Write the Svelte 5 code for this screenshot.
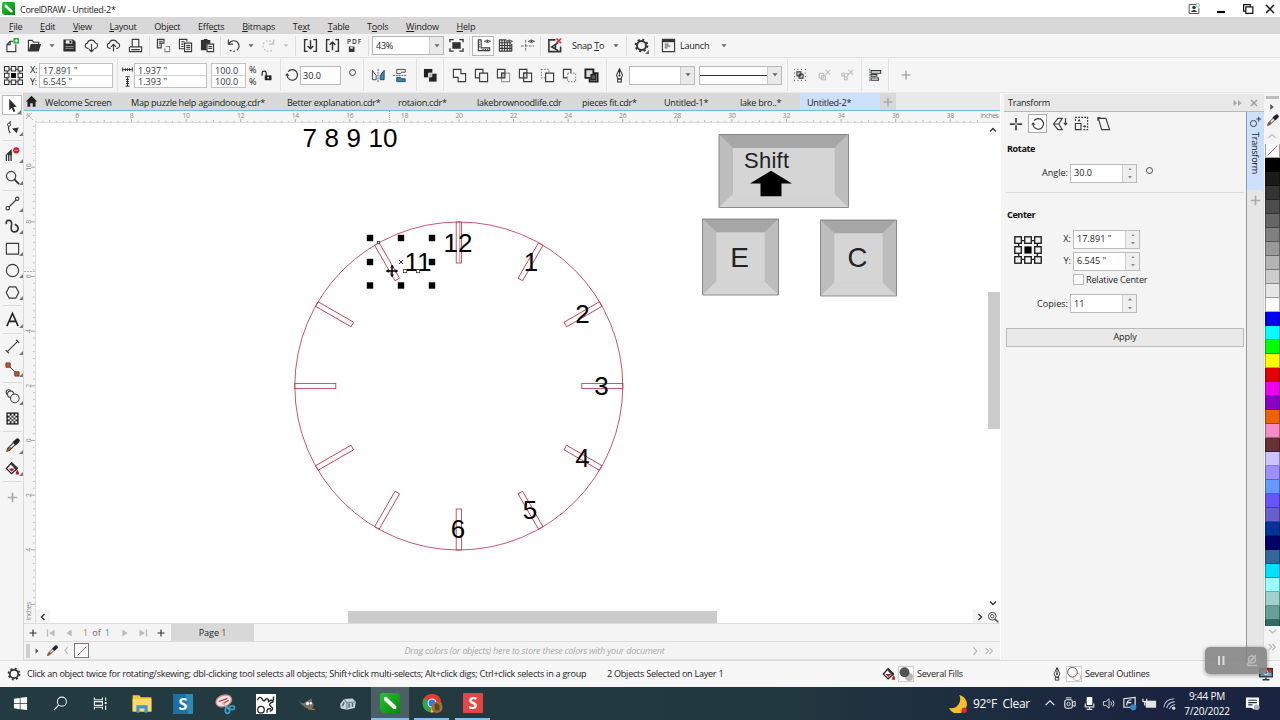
<script>
  const K = 'stroke="#3a3a3a" fill="none" stroke-width="1.2"';
  const fold = (a, b, extra = '') =>
    `<g ${K}><path ${a} d="M1.5 1.5H9.5V10.5H1.5Z"/><path ${b} d="M6 5.5H14.5V14.5H6Z" fill="#f4f4f4"/>${extra}</g>`;
  const dropper = '<path d="M2 14L3 11L9.5 4.5L11.5 6.5L5 13Z" fill="#eee" stroke="#333" stroke-width="1.1"/><path d="M2 14L3 11L5 9L7 11L5 13Z" fill="#a5532b"/><path d="M8 4.5L11.5 8L12.5 7L15 4.6A2 2 0 0 0 11.5 1.2L9 3.5Z" fill="#222"/>';
  const bucket = '<path d="M1.5 8L7 2L13 8L7 13.5Z" fill="#fff" stroke="#222" stroke-width="1.4"/><path d="M7 1L14 7.5L12 10L5.5 3Z" fill="#333"/><path d="M4 8H10.5L7.2 11.5Z" fill="#b3172b"/><path d="M13 9Q16 13 14.5 14.5H11.5Q11 13 13 9Z" fill="#b3172b"/>';
  const cloud = 'M5 11H3.6A2.8 2.8 0 0 1 3.5 5.5A4.5 4.5 0 0 1 12 5A3.1 3.1 0 0 1 12.4 11H11';
  const gear = '<circle cx="8" cy="8" r="4.8" fill="none" stroke="#333" stroke-width="2"/><circle cx="8" cy="8" r="6.3" fill="none" stroke="#333" stroke-width="2" stroke-dasharray="2.3 2.648"/>';
  const pen = '<path d="M8 .8L4.8 7.6L6.3 11.5H9.7L11.2 7.6ZM8 1V7M6 12H10V15H6Z" fill="none" stroke="#333" stroke-width="1.1"/><circle cx="8" cy="8" r="1.2" fill="#333"/>';
  const rot = '<path d="M3.6 4.2A6 6 0 1 1 2.4 9" fill="none" stroke="#333" stroke-width="1.3"/><path d="M.3 8.8L2.5 5.8L5 8.8Z" fill="#333"/>';
  const anchor = '<path d="M3 3H15V15H3Z" fill="none" stroke="#222" stroke-width=".9"/><g fill="#f6f6f6" stroke="#222" stroke-width=".9"><rect x=".5" y=".5" width="4.2" height="4.2"/><rect x="6.9" y=".5" width="4.2" height="4.2"/><rect x="13.3" y=".5" width="4.2" height="4.2"/><rect x=".5" y="6.9" width="4.2" height="4.2"/><rect x="13.3" y="6.9" width="4.2" height="4.2"/><rect x=".5" y="13.3" width="4.2" height="4.2"/><rect x="6.9" y="13.3" width="4.2" height="4.2"/><rect x="13.3" y="13.3" width="4.2" height="4.2"/></g><rect x="6.7" y="6.7" width="4.6" height="4.6" fill="#000"/>';
  const eye = '<path d="M9 3.5Q12 .5 15.5 3.5Q12 6.5 9 3.5Z" fill="#f4f4f4" stroke="#444" stroke-width=".9"/><circle cx="12.2" cy="3.5" r="1" fill="#333"/>';

  const icons = {
    new: `<path d="M9 3.5H5.5L2 7V14.5H11.5V7M5.5 3.5V7H2" ${K}/><path d="M9 0h6v6h-6z" fill="#2fae4a"/><path d="M12 1.2V4.8M10.2 3H13.8" stroke="#fff"/>`,
    open: `<path d="M1.5 14V2.5H5.5L7 4.5H12.5V6.5" ${K}/><path d="M1.5 14.5L4 6.5H15L12.5 14.5Z" fill="#333"/>`,
    save: '<path d="M1.5 1.5H12L14.5 4V14.5H1.5Z" fill="#2d2d2d"/><rect x="4" y="2.5" width="7" height="3.5" fill="#f4f4f4"/><rect x="8" y="3" width="2" height="2.4" fill="#222"/><path d="M3.5 9H12.5M3.5 11H12.5" stroke="#999"/>',
    clouddown: `<path d="${cloud}M8 6.5V14.5M5.3 12L8 14.6L10.7 12" ${K}/>`,
    cloudup: `<path d="${cloud}M8 14.5V7M5.3 9.4L8 6.8L10.7 9.4" ${K}/>`,
    print: `<path d="M4.5 9V1.5H11.5V9M2 9.5H14.5V14.5H1.5V9.5M3.5 12.4H12.5" ${K}/>`,
    cut: `<path d="M1.5 1.5H8.5V5.5H5.5V10.5H1.5ZM3 3.5H7M3 5.5H5M3 7.5H4" ${K}/><path d="M10.5 9H14.5V14.5H9.5V11" fill="none" stroke="#888" stroke-width="1.2"/>`,
    copy: `<path d="M7 11.5H1.5V1.5H9.5V4M3.5 4H7M3.5 6.5H6M3.5 9H6M7 5.5H14.5V14.5H7ZM8.8 8H13M8.8 10H13M8.8 12H13" ${K}/>`,
    paste: `<path d="M1 2H4V1H8V2H11V6H7V13H1Z" fill="#333"/><path d="M7.5 6.5H14.5V14.5H7.5ZM9 9H13M9 11H13" ${K}/>`,
    undo: `<path d="M2.5 1.5V6.5H7.5" ${K}/><path d="M2.8 6.2Q6 1.5 11 3.5Q15.5 7 13 11.5" ${K}/><path d="M13 11.5Q9.5 16 4 13" ${K} stroke-dasharray="2 2"/>`,
    redo: '<g stroke="#c5c5c5" fill="none" stroke-width="1.3"><path d="M13.5 1.5V6.5H8.5"/><path d="M13.2 6.2Q10 1.5 5 3.5Q.5 7 3 11.5Q6.5 16 12 13" stroke-dasharray="2 1.7"/></g>',
    import: '<path d="M5 1.7H1.7V14.3H5M11 14.3H14.3V1.7H11M8 2.5V11.5M5 8.5L8 11.5L11 8.5" fill="none" stroke="#333" stroke-width="1.5"/>',
    export: '<path d="M5 1.7H1.7V14.3H5M11 14.3H14.3V1.7H11M8 13V4.5M5 7.2L8 4.2L11 7.2" fill="none" stroke="#333" stroke-width="1.5"/>',
    pdf: '<text x="0" y="6.8" font-size="7" font-weight="600" textLength="15" fill="#333" font-family="Open Sans">PDF</text><path d="M2 9H7L8 10V15H2Z" fill="#333"/><path d="M3.5 9.5H6.2V11.5H3.5Z" fill="#ddd"/>',
    full: '<rect x="3.5" y="4.5" width="9" height="7" fill="#333"/><path d="M1 4.5V1.8H5M11 1.8H15V4.5M15 11V14H11M5 14H1V11" stroke="#333" fill="none" stroke-width="1.4"/>',
    ruler: `<path d="M2.5 2V13.5H14.5V10.5H5.5V2ZM2.5 4.5H4M2.5 7H4M2.5 9.5H4M7.5 13V11.8M10 13V11.8M12.5 13V11.8" ${K}/>${eye}`,
    grid: `<path d="M1.5 2V14.5M4.3 2V14.5M7.1 2V14.5M9.9 2V14.5M12.7 4V14.5M14.7 6V14.5M1 2H9M1 5H14M1 8H15M1 11H15M1 14H15" ${K}/>${eye}`,
    guides: `<path d="M6 2V15M1 8.5H15" stroke="#666" stroke-dasharray="3 1.2"/>${eye}`,
    snapoff: '<path d="M9 2H2V14.5H14.5V9M12 5L5 9.5L12 13.5M9 7.5V12" fill="none" stroke="#333" stroke-width="1.7"/><path d="M10 .5L15 5.5M15 .5L10 5.5" stroke="#cf3045" stroke-width="1.7"/>',
    gear,
    launch: `<path d="M1.5 1.5H14.5V14.5H1.5Z" ${K}/><path d="M1.5 3.2H14.5" stroke="#333" stroke-width="2.5"/><path d="M4 6.5H8M4 8.5H10M4 10.5H7" stroke="#444"/>`,
    hsize: '<path d="M1 5V11M15 5V11M2 8H14M5 6V10M8 6V10M11 6V10" stroke="#333" stroke-width="1.5"/>',
    vsize: '<path d="M5 1H11M5 15H11M8 2V14M6 5H10M6 8H10M6 11H10" stroke="#333" stroke-width="1.5"/>',
    lock: '<path d="M1.5 9V5A2.8 2.8 0 0 1 7 5V9" fill="none" stroke="#222" stroke-width="1.6"/><path d="M5 8.5H14V15H5Z" fill="#222"/><circle cx="9.5" cy="11.5" r="1.2" fill="#fff"/>',
    rot,
    mirh: '<path d="M1.5 2.5L5.5 8V12.5H1.5Z" fill="none" stroke="#444"/><path d="M7.5 1V15" stroke="#555" stroke-dasharray="2 1"/><path d="M14 2.5L9.8 8V12.5H14Z" fill="#3590a8" stroke="#246"/>',
    mirv: '<path d="M4 1.5H13V4.5H9L8 6H4Z" fill="none" stroke="#444"/><path d="M0 8H15" stroke="#555" stroke-dasharray="2 1"/><path d="M4 14.5H13V11.5H9L8 10H4Z" fill="#3590a8" stroke="#246"/>',
    combine: '<path d="M1 1H10V10H1Z" fill="#222"/><path d="M6 5.5H15V15H6Z" fill="#222" stroke="#f4f4f4"/><path d="M6.5 6H9.5V9.5H6.5Z" fill="#aaa" stroke="#fff" stroke-width=".7"/>',
    weld: `<path d="M1.5 1.5H9.5V6H14.5V14.5H6.5V10H1.5Z" ${K}/>`,
    trim: fold('', ''),
    inter: fold('', 'stroke="#999"', '<path d="M6 5.5H9.5V10.5H6Z" fill="#bbb"/>'),
    simp: fold('', '', '<path d="M6 5.5H9.5V10.5H6Z" fill="#ddd"/>'),
    front: fold('stroke-dasharray="1.5 1.5" stroke="#888"', '', ''),
    back: fold('', 'stroke-dasharray="1.5 1.5" stroke="#888"', ''),
    bound: '<path d="M1.5 1.5H10V5.5H14.5V14.5H6V10.5H1.5Z" fill="#ddd" stroke="#222" stroke-width="2"/><path d="M7.5 7H12.5V12.5H7.5Z" fill="#555" stroke="#222" stroke-width="1.4"/>',
    pen,
    group: '<g fill="#777"><path d="M1 1h1.3v1.3H1zM5 1h1.3v1.3H5zM9 1h1.3v1.3H9zM13.5 1h1.3v1.3h-1.3zM1 5h1.3v1.3H1zM1 9h1.3v1.3H1zM1 13.5h1.3v1.3H1zM5 13.5h1.3v1.3H5zM9 13.5h1.3v1.3H9zM13.5 13.5h1.3v1.3h-1.3zM13.5 5h1.3v1.3h-1.3zM13.5 9h1.3v1.3h-1.3z"/></g><path d="M4.5 4.5H9V9H4.5ZM7 7H11.5V11.5H7Z" fill="none" stroke="#333" stroke-width="1.3"/>',
    ungroup: '<g fill="none" stroke="#bbb" stroke-width="1.2"><path d="M1.5 6H6.5V11.5H1.5ZM4 8.5H8.5V13.5H4Z"/><path d="M8.5 2L14 7.5M14 2L8.5 7.5"/></g>',
    ungroupall: '<g fill="none" stroke="#bbb" stroke-width="1.2"><path d="M2 6H5V9H2ZM5 10H8V13.5H5ZM6 6.5H9V10"/><path d="M9.5 2L15 7.5M15 2L9.5 7.5"/></g>',
    align: '<path d="M2 1V15" stroke="#3a8a7a" stroke-dasharray="2 1"/><path d="M3.5 3H14.5V6H3.5ZM3.5 7.5H10V9.5H3.5ZM3.5 11.5H12V14H3.5Z" fill="none" stroke="#333" stroke-width="1.2"/>',
    plus: '<path d="M8 3V13M3 8H13" stroke="#aaa" stroke-width="1.8"/>',
    darkplus: '<path d="M8 4V12M4 8H12" stroke="#333" stroke-width="1.3"/>',
    home: '<path d="M8 1L1 8H3V14.5H6.5V10H9.5V14.5H13V8H15Z" fill="#222"/>',
    pick: '<path d="M4.5 1L12.5 9.2L9 9.7L11 14L9 15L7.2 10.7L4.5 13Z" fill="#2a2a2a"/>',
    shape: '<path d="M5.5 14Q1.5 8 6 1.5" fill="none" stroke="#333" stroke-width="1.2"/><circle cx="4.3" cy="5" r="1.7" fill="#fff" stroke="#333"/><path d="M7.5 9L14.5 8L12.5 14Z" fill="#333"/>',
    brush: '<path d="M1.5 8V15M4 6V15M6.500 5V15" stroke="#333" stroke-width="1.4" fill="none"/><path d="M1 8L7.200 2V9Z" fill="#333"/><circle cx="12" cy="3.500" r="3.300" fill="#d4142a"/><path d="M10 3.500H14" stroke="#fff" stroke-width=".7"/>',
    zoom: `<circle cx="6.5" cy="6.5" r="5" ${K}/><path d="M10 10L15 15" stroke="#333" stroke-width="2"/>`,
    line: `<path d="M4 12L12 4" ${K}/><circle cx="2.8" cy="13" r="1.8" ${K}/><circle cx="13" cy="3" r="1.8" ${K}/>`,
    curve: '<path d="M1.5 5.500Q.5 1.500 4 1.500Q7.500 1.500 7 6Q5.500 13.500 9.500 13.800Q13.500 14 14 10Q14 7 10.500 5.500" fill="none" stroke="#333" stroke-width="1.800"/>',
    rect: `<path d="M1.5 2.5H14.5V14H1.5Z" ${K}/>`,
    ellipse: `<circle cx="8" cy="8" r="6.5" ${K}/>`,
    poly: `<path d="M4.5 2H11.5L14.7 8L11.5 14H4.5L1.3 8Z" ${K}/>`,
    text: '<path d="M2 15L8 1.5L14 15M4.2 10H11.8" fill="none" stroke="#222" stroke-width="1.7"/>',
    dim: `<path d="M2.5 13.5L13.5 2.5M.8 11.8L4.2 15.2M11.8 .8L15.2 4.2" ${K}/>`,
    connect: '<path d="M4 4L13 13" stroke="#333"/><path d="M1 1H5.5V5.5H1ZM10.5 10.5H15V15H10.5Z" fill="#c25e20" stroke="#633"/>',
    blend: '<g fill="#f4f4f4" stroke="#3a3a3a" stroke-width="1.1"><circle cx="3.800" cy="3.500" r="2.600"/><circle cx="6" cy="5.500" r="3.300"/><circle cx="10.500" cy="10" r="4.600"/></g>',
    checker: '<path d="M1.5 1.5H14.5V14.5H1.5Z" fill="#222"/><g fill="#fff"><path d="M3 3h2v2H3zM7 3h2v2H7zM11 3h2v2h-2zM5 5h2v2H5zM9 5h2v2H9zM3 7h2v2H3zM7 7h2v2H7zM11 7h2v2h-2zM5 9h2v2H5zM9 9h2v2H9zM3 11h2v2H3zM7 11h2v2H7zM11 11h2v2h-2z"/></g>',
    dropper, bucket,
    move: '<path d="M8 1V15M1 8H15" stroke="#444" stroke-width="2"/><path d="M8 6V10M6 8H10" stroke="#f4f4f4" stroke-width=".8"/>',
    scale: '<path d="M1.5 8L6 2.300H10.300L6.800 8L10.300 13.700H6ZM1.500 8H6.800M13.500 2V8.500M11.900 6.800L13.500 8.800L15.100 6.800" fill="none" stroke="#444" stroke-width="1.200"/>',
    size: `<path d="M1.5 8H7.5V14.5H1.5Z" ${K}/><path d="M1.5 5V1.5H14.5V14.5H10M10 11H13" ${K} stroke-dasharray="2 1.2"/><path d="M4 5.5L5.5 3L7 5.5ZM11 9.5L13.5 11L11 12.5Z" fill="#333"/>`,
    skew: `<path d="M2.500 2.5H10.500L14.5 14.5H6Z" ${K}/><path d="M2 5V2H5" ${K}/>`,
    xform: '<circle cx="5.5" cy="10.5" r="3.8" fill="none" stroke="#345" stroke-width="1.2"/><path d="M12 2V8M9 5H15" stroke="#345" stroke-width="1.3"/>',
    start: '<path d="M1 3L7.2 2V7.6H1ZM8 1.9L15 1V7.6H8ZM1 8.4H7.2V14L1 13ZM8 8.4H15V15L8 14Z" fill="#fff"/>',
    find: '<circle cx="9.5" cy="6" r="4.8" fill="none" stroke="#eee" stroke-width="1.1"/><path d="M6 9.7L1 15" stroke="#eee" stroke-width="1.3"/>',
    tasks: '<path d="M1.500 1.500V4H10V1.500M1.500 14.500V12H10V14.500M1.500 6H10V10H1.500ZM13.500 1.500V5M13.500 10V15" fill="none" stroke="#eee" stroke-width="1.2"/><rect x="12.500" y="6.500" width="2" height="2" fill="#fff"/>',
    folder: '<path d="M.5 1H6L7 2.5H15.5V14H.5Z" fill="#f6c544"/><path d="M.5 4H15.5V14H.5Z" fill="#ffd96b"/><path d="M3.5 15V9H12.5V15H10V11.5H6V15Z" fill="#3b97cf"/>',
    snagit: '<rect width="16" height="16" fill="#1d6fa4"/><path d="M10 0H16V16H12Z" fill="#2e8bb8"/><text x="8" y="12.700" text-anchor="middle" font-size="13" font-weight="700" fill="#fff" font-family="Open Sans">S</text>',
    snip: '<ellipse cx="7" cy="5.5" rx="6.5" ry="4.5" transform="rotate(-20 7 5.5)" fill="#f0e3e3" stroke="#b88"/><path d="M3 6L10 3.5M6 8L11 5" stroke="#c33"/><path d="M6 7L12 13" stroke="#bbb"/><ellipse cx="10" cy="13" rx="1.7" ry="2.5" fill="none" stroke="#3b9dc9" stroke-width="1.5"/><ellipse cx="13.6" cy="11" rx="2" ry="1.5" fill="none" stroke="#3b9dc9" stroke-width="1.4"/>',
    puzzle: '<path d="M0 0H16V16H0Z" fill="#fff"/><path d="M1 5Q3 1 5 4Q6 7 8 4Q10 3 10 6Q13 4 14 6M14 6Q9 8 12 10Q15 12 11 14M14 2V5M9 15Q8 11 12 12" fill="none" stroke="#222" stroke-width="1.1"/><circle cx="4" cy="12.5" r="2.6" fill="none" stroke="#222"/>',
    gimp: '<path d="M1 5Q4 9 7 6L12 3L12.5 6Q15 8 13 11Q9 14 5 10Q2 8 1 5Z" fill="#77706a"/><circle cx="8.5" cy="7.5" r="1.4" fill="#fff"/><circle cx="11.3" cy="7.3" r="1.1" fill="#fff"/><path d="M9 12L15 13" stroke="#b77a3a" stroke-width="1.3"/>',
    box: '<path d="M1 8L4.500 3.500L12 3L15 6L14 11.500L7 13L1.500 12Z" fill="#c6d3dc"/><path d="M4.500 3.500L7 7L7 13M7 7L15 6" stroke="#71828e" fill="none"/><path d="M3 10L4.5 6.5M9 11V7.5M12 10.5V7" stroke="#506472" stroke-width="1.3"/>',
    corel: '<defs><linearGradient id="cg" x2="1" y2="1"><stop stop-color="#27c52b"/><stop offset="1" stop-color="#04860b"/></linearGradient></defs><path d="M0 2Q0 0 2 0H14Q16 0 16 2V16H4Q0 16 0 12Z" fill="url(#cg)"/><path d="M3 3.5L5 3L13 10.5V13L10.5 12.5L3.5 6Z" fill="#fff"/>',
    chrome: '<circle cx="8" cy="8" r="7.5" fill="#e33b2e"/><path d="M8 8L1.5 4.2A7.5 7.5 0 0 0 7 15.5Z" fill="#2fa552"/><path d="M8 8H15.4A7.5 7.5 0 0 1 7 15.5Z" fill="#f7c62f"/><circle cx="8" cy="8" r="3.6" fill="#fff"/><circle cx="8" cy="8" r="2.8" fill="#3879d9"/><circle cx="12" cy="11.5" r="4.5" fill="#9a733b"/><path d="M10 9Q12 7 14 10V14H10.5Z" fill="#654724"/>',
    snagred: '<rect width="16" height="16" rx="1" fill="#e54645"/><text x="8" y="12.700" text-anchor="middle" font-size="13" font-weight="700" fill="#fff" font-family="Open Sans">S</text>',
    chevup: '<path d="M3 10.5L8 5.5L13 10.5" fill="none" stroke="#eee" stroke-width="1.3"/>',
    camera: '<rect x="3" y="4" width="8" height="9" rx="2" fill="none" stroke="#eee" stroke-width="1.2"/><circle cx="7" cy="8.5" r="1.8" fill="none" stroke="#eee"/><path d="M4 2H10M11 7L14 5.5V11L11 10" stroke="#eee" fill="none"/>',
    mic: '<rect x="5" y="1" width="6" height="8.5" rx="1" fill="#fff"/><path d="M3.5 8V11.5H12.5V8M8 11V14M5 14.3H11" stroke="#ddd" fill="none" stroke-width="1.3"/>',
    sound: '<path d="M1.5 6H4L7.5 3V13L4 10H1.5ZM9.5 6Q11 8 9.5 10M11.5 4.5Q14 8 11.5 11.5" fill="none" stroke="#ddd"/>',
    pinned: '<path d="M2 3L14 1.5V12H2Z" fill="none" stroke="#eee" stroke-width="1.2"/><path d="M5 10Q5 4 10 4M6 7H10" stroke="#eee" fill="none" stroke-width="1.3"/><circle cx="12" cy="12" r="3.3" fill="#3a86c8"/>',
    battery: '<rect x="4" y="5" width="11" height="7.5" fill="#e5e5e5"/><path d="M1 3V6H5V3M3 6V10" stroke="#eee" fill="none" stroke-width="1.3"/>',
    wifi: '<path d="M2 12Q3 3.5 13 3M5 13Q6 7 13.5 6M8 14Q9 10 14 9" fill="none" stroke="#bbc" stroke-width="1.2"/><circle cx="12.5" cy="13" r="1.7" fill="#ddd"/>',
    note: '<path d="M1 1.5H15V12.5H10V15L7 12.5H1Z" fill="#fff"/><path d="M3.5 4.5H12.5M3.5 7H12.5M3.5 9.5H8" stroke="#1b2843" stroke-width="1.2"/><circle cx="12.5" cy="12" r="3" fill="#aab0ba"/>',
    moon: '<path d="M9 0A8 8 0 0 1 0 11.5A8.3 8.3 0 1 0 9 0Z" fill="#f9bf29"/><circle cx="13.5" cy="13.5" r="2.4" fill="#d62a2d"/>',
    fills: '<rect x=".5" y=".5" width="15" height="15" fill="#fff" stroke="#ccc"/><circle cx="11" cy="11" r="4" fill="#b8b8b8"/><circle cx="6.5" cy="6.3" r="5" fill="#555"/>',
    outlines: '<rect x=".5" y=".5" width="15" height="15" fill="#fff" stroke="#ccc"/><circle cx="11" cy="11" r="3.8" fill="none" stroke="#bbb"/><circle cx="6.5" cy="6.3" r="4.8" fill="#fff" stroke="#555"/>',
    user: '<path d="M1.5 2H11M1.5 2V14H14.5V7" fill="none" stroke="#444" stroke-width="1.2"/><circle cx="8" cy="6" r="2.3" fill="#333"/><path d="M3.5 12Q8 6.5 12.5 12Z" fill="#333"/><circle cx="13" cy="3" r="2.5" fill="none" stroke="#50b86a"/>',
    min: '<path d="M4 11H12" stroke="#000" stroke-width="2.2"/>',
    max: '<path d="M5.5 10.5H3V3H10.5V5.5M5.5 5.5H13.5V13H5.5Z" fill="none" stroke="#111" stroke-width="1.4"/>',
    close: '<path d="M3.5 3.5L12.5 12.5M12.5 3.5L3.5 12.5" stroke="#111" stroke-width="1.7"/>',
    graycl: '<path d="M4 4L12 12M12 4L4 12" stroke="#999" stroke-width="1.7"/>',
    dbl: '<path d="M2 4L7 8L2 12ZM8 4L13 8L8 12Z" fill="#aaa"/>',
    first: '<path d="M4 4V12" stroke="#bbb" stroke-width="1.6"/><path d="M12 4L6 8L12 12Z" fill="#bbb"/>',
    prev: '<path d="M11 4L5 8L11 12Z" fill="#bbb"/>',
    next: '<path d="M5 4L11 8L5 12Z" fill="#bbb"/>',
    last: '<path d="M12 4V12" stroke="#bbb" stroke-width="1.6"/><path d="M4 4L10 8L4 12Z" fill="#bbb"/>',
    tri: '<path d="M6 4.5L10 8L6 11.5Z" fill="#555"/>',
    lt: '<path d="M10 3L5.5 8L10 13" stroke="#bbb" fill="none" stroke-width="1.5"/>',
    gt: '<path d="M6 3L10.5 8L6 13" stroke="#bbb" fill="none" stroke-width="1.5"/>',
    gtgt: '<path d="M3.5 4L7.5 8L3.5 12M8.5 4L12.5 8L8.5 12" stroke="#aaa" fill="none" stroke-width="1.4"/>',
    bl: '<path d="M10 4L6 8L10 12" stroke="#333" fill="none" stroke-width="1.8"/>',
    br: '<path d="M6 4L10 8L6 12" stroke="#333" fill="none" stroke-width="1.8"/>',
    bu: '<path d="M4 10L8 6L12 10" stroke="#333" fill="none" stroke-width="1.8"/>',
    bd: '<path d="M4 6L8 10L12 6" stroke="#333" fill="none" stroke-width="1.8"/>',
    gu: '<path d="M3 10.5L8 6L13 10.5" stroke="#bbb" fill="none" stroke-width="1.5"/>',
    gd: '<path d="M3 5.5L8 10L13 5.5" stroke="#bbb" fill="none" stroke-width="1.8"/>',
    monitor: '<rect x="0" y="1" width="16" height="11" fill="#333"/><rect x="1.5" y="2.5" width="13" height="4" fill="#c33"/><rect x="1.5" y="6.5" width="13" height="4" fill="#4bb6d5"/><circle cx="8" cy="6.5" r="2.3" fill="none" stroke="#fff"/><path d="M4 14.5H12M8 12V14" stroke="#333" stroke-width="1.6"/>',
    none: '<path d="M0 0H16V16H0Z" fill="#fff"/><path d="M2 14L14 2" stroke="#b55" stroke-width="1.2"/>'
  };

  const menus = [['', 'F', 'ile'], ['', 'E', 'dit'], ['', 'V', 'iew'], ['', 'L', 'ayout'], ['Ob', 'j', 'ect'], ['Effe', 'c', 'ts'], ['', 'B', 'itmaps'], ['Te', 'x', 't'], ['', 'T', 'able'], ['T', 'o', 'ols'], ['', 'W', 'indow'], ['', 'H', 'elp']];

  const std = [
    ['i', 22, 'new'], ['i', 22, 'open'], ['c', 13], ['i', 22, 'save'], ['i', 22, 'clouddown'], ['i', 22, 'cloudup'], ['i', 22, 'print'], ['s', 6],
    ['i', 22, 'cut'], ['i', 22, 'copy'], ['i', 22, 'paste'], ['s', 4], ['i', 22, 'undo'], ['c', 13], ['i', 22, 'redo'], ['cg', 13], ['s', 7],
    ['i', 22, 'import'], ['i', 22, 'export'], ['i', 22, 'pdf'], ['s', 6], ['combo', 72, '43%'], ['g', 2], ['i', 22, 'full'], ['s', 5],
    ['on', 22, 'ruler'], ['i', 22, 'grid'], ['i', 22, 'guides'], ['s', 5], ['i', 22, 'snapoff'], ['snap', 44], ['c', 13], ['s', 8],
    ['gear', 22, 'gear'], ['s', 5], ['i', 22, 'launch'], ['t', 38, 'Launch'], ['c', 13]
  ];
  const shaping = ['weld', 'trim', 'inter', 'simp', 'front', 'back', 'bound'];
  const tabs = [['Welcome Screen', 86], ['Map puzzle help againdooug.cdr*', 156], ['Better explanation.cdr*', 111], ['rotaion.cdr*', 79], ['lakebrownoodlife.cdr', 105], ['pieces fit.cdr*', 82], ['Untitled-1*', 76], ['lake bro..*', 60]];
  const tools = [
    ['pick', 20, 1], ['shape', 24, 1], ['-', 3], ['brush', 24, 1], ['zoom', 22, 1], ['-', 4], ['line', 23, 1], ['curve', 22, 1], ['rect', 22, 1],
    ['ellipse', 22, 1], ['poly', 22, 1], ['-', 5], ['text', 23, 1], ['-', 4], ['dim', 23, 1], ['connect', 22, 1], ['-', 5], ['blend', 23, 1], ['checker', 21, 0],
    ['-', 5], ['dropper', 23, 1], ['bucket', 22, 1], ['-', 4], ['plus', 28, 0]
  ];
  const swatches = ['#000', '#1a1a1a', '#333', '#4d4d4d', '#666', '#808080', '#999', '#b3b3b3', '#ccc', '#e6e6e6', '#fff', '#0000f0', '#00ffff', '#00ff00', '#ffff00', '#e30000', '#ee00ee', '#8b00c0', '#ec6300', '#f58cc5', '#653333', '#ccc4ff', '#9c8fff', '#6699ff', '#6655ff', '#665fcc', '#003399', '#000066', '#336699', '#00e0ff', '#99ffff', '#9fd2cb', '#669f96', '#336b64'];
  const apps = ['start', 'find', 'tasks', 'folder', 'snagit', 'snip', 'puzzle', 'gimp', 'box'];
  const tray = ['chevup', 'camera', 'mic', 'sound', 'pinned', 'battery', 'wifi'];

  const unit = 27.33;
  const range = (a, b) => Array.from({ length: b - a + 1 }, (_, i) => a + i);
  const hTicks = range(18, 156).map((q) => ({ q, x: 459 - 24 + (q / 4 - 20) * unit * 0.9985 })).filter((t) => t.x > 12 && t.x < 972);
  const vTicks = range(-24, 46).map((q) => ({ q, y: 440.5 - 111 - (q / 4) * unit })).filter((t) => t.y > 14 && t.y < 496);
  const marks = range(0, 11).map((i) => i * 30);
  const digits = [['12', 458, 252], ['1', 531, 271], ['2', 582.5, 323], ['3', 601.5, 395], ['4', 582.5, 467], ['5', 530, 519], ['6', 458, 538]];
  const handles = [[370, 238], [401, 238], [432, 238], [370, 262], [432, 262], [370, 285.5], [401, 285.5], [432, 285.5]];
</script>

{#snippet ic(name, cls = 'i14')}
  <svg class={cls} viewBox="0 0 16 16">{@html icons[name]}</svg>
{/snippet}
{#snippet caret(gray = false)}
  <svg class="caret" viewBox="0 0 7 4"><path d="M.5 0H6.5L3.5 3.6Z" fill={gray ? '#c8c8c8' : '#666'} /></svg>
{/snippet}
{#snippet spin(value)}
  <div class="spin"><span>{value}</span><div class="arrows">
    <svg viewBox="0 0 5 3"><path d="M0 3L2.5 0L5 3Z" fill="#888" /></svg><svg viewBox="0 0 5 3"><path d="M0 0L2.5 3L5 0Z" fill="#888" /></svg>
  </div></div>
{/snippet}
{#snippet key(x, y, w, h)}
  <g transform="translate({x} {y})">
    <path d="M0 0H{w}V{h}H0Z" fill="#cdcdcd" />
    <path d="M0 0H{w}L{w - 14} 13.5H14Z" fill="#a6a6a6" />
    <path d="M0 0L14 13.5V{h - 13.5}L0 {h}ZM{w} 0L{w - 14} 13.5V{h - 13.5}L{w} {h}Z" fill="#bdbdbd" />
    <path d="M14 13.5H{w - 14}V{h - 13.5}H14Z" fill="#d5d5d5" />
    <path d="M14 {h - 13.5}H{w - 14}L{w} {h}H0Z" fill="#d4d4d4" />
    <path d="M0 0H{w}V{h}H0Z" fill="none" stroke="#777" stroke-width=".8" />
  </g>
{/snippet}

<div class="window">
  <header class="title">{@render ic('corel', 'i13')}<span>CorelDRAW - Untitled-2*</span>
    <div class="winbtns">{@render ic('user', 'i12')}{@render ic('min', 'i16')}{@render ic('max', 'i14 wm')}{@render ic('close', 'i14 wc')}</div>
  </header>
  <nav class="menu">{#each menus as m}<span>{m[0]}<u>{m[1]}</u>{m[2]}</span>{/each}</nav>

  <div class="std">
    {#each std as [kind, w, v]}
      <div class="cell {kind}" style:width="{w}px">
        {#if kind === 'i' || kind === 'on' || kind === 'gear'}{@render ic(v, 'i15')}
        {:else if kind === 'c'}{@render caret()}
        {:else if kind === 'cg'}{@render caret(true)}
        {:else if kind === 's'}<i></i>
        {:else if kind === 'combo'}<span>{v}</span><b>{@render caret()}</b>
        {:else if kind === 'snap'}<span>Snap <u>T</u>o</span>
        {:else if kind === 't'}<span>{v}</span>{/if}
      </div>
    {/each}
  </div>

  <div class="prop">
    <svg class="anchor" viewBox="0 0 18 18">{@html anchor}</svg>
    <div class="lbl"><span>X:</span><span>Y:</span></div>
    <div class="pair pos"><span>17.891 "</span><span>6.545 "</span></div>
    <i class="sep s1"></i>
    <div class="dims">{@render ic('hsize', 'i11')}{@render ic('vsize', 'i11')}</div>
    <div class="pair siz"><span>1.937 "</span><span>1.393 "</span></div>
    <div class="pair pct"><span>100.0</span><span>100.0</span></div>
    <div class="lbl pc"><span>%</span><span>%</span></div>
    {@render ic('lock', 'i12 lk')}
    <i class="sep s2"></i>
    {@render ic('rot', 'i14 rt')}
    <div class="field">30.0</div>
    <div class="deg"></div>
    <i class="sep s3"></i>
    <div class="slot">{@render ic('mirh', 'i15')}</div><div class="slot">{@render ic('mirv', 'i15')}</div>
    <i class="sep s4"></i>
    <div class="slot">{@render ic('combine', 'i15')}</div>
    <i class="sep s5"></i>
    {#each shaping as s}<div class="slot">{@render ic(s, 'i15')}</div>{/each}
    <i class="sep s6"></i>
    <div class="slot pn">{@render ic('pen', 'i15')}</div>
    <div class="drop d1"><b>{@render caret()}</b></div>
    <div class="drop d2"><em></em><b>{@render caret()}</b></div>
    <i class="sep s7"></i>
    <div class="slot">{@render ic('group')}</div><div class="slot ug">{@render ic('ungroup')}</div><div class="slot">{@render ic('ungroupall')}</div>
    <i class="sep s8"></i>
    <div class="slot">{@render ic('align')}</div>
    <i class="sep s9"></i>
    <div class="slot ad">{@render ic('plus')}</div>
  </div>

  <div class="main">
    <aside class="tools">
      {#each tools as [name, h, flyout], n}
        <div class="tool" class:sel={n === 0} class:rule={name === '-'} style:height="{h}px">
          {#if name !== '-'}{@render ic(name, 'i15')}{#if flyout}<s></s>{/if}{/if}
        </div>
      {/each}
    </aside>

    <section class="doc">
      <div class="tabs">
        <div class="home">{@render ic('home', 'i13')}</div>
        {#each tabs as [name, w]}<div class="tab" style:width="{w}px">{name}</div>{/each}
        <div class="tab active">Untitled-2*</div>
        <div class="newtab">{@render ic('plus', 'i14')}</div>
      </div>
      <svg class="hr" viewBox="0 0 976 12">
        <path d="M3 3L9 9M3 3V6M3 3H6M2 8L8 2" stroke="#aaa" stroke-width=".8" fill="none" />
        {#each hTicks as t}
          {#if t.q % 8 === 0}
            <path d="M{t.x} 8V12" stroke="#999" stroke-width=".8" />
            {#if t.q <= 152}<text x={t.x} y="6.8" text-anchor="middle">{t.q / 4}</text>{/if}
          {:else}<path d="M{t.x} {t.q % 4 === 0 ? 9 : 10}V11.3" stroke="#aaa" stroke-width=".8" />{/if}
        {/each}
        <path d="M365.500 0V12" stroke="#888" stroke-width=".7" stroke-dasharray="1 1" />
        <text x="956.500" y="6.500" textLength="18">inches</text>
        <path d="M12 11.500H976" stroke="#ddd" />
      </svg>
      <div class="work">
        <svg class="vr" viewBox="0 12 12 500">
          {#each vTicks as t}
            {#if t.q % 8 === 0}
              <path d="M7 {t.y}H11" stroke="#999" stroke-width=".8" />
              {#if t.q > -20}<text transform="translate(6.500 {t.y}) rotate(-90)" text-anchor="middle">{Math.abs(t.q / 4)}</text>{/if}
            {:else}<path d="M9 {t.y}H10.500" stroke="#aaa" stroke-width=".8" />{/if}
          {/each}
          <path d="M0 160.500H12" stroke="#999" stroke-width=".7" stroke-dasharray="2 1" />
          <text transform="translate(6.500 509) rotate(-90)" textLength="18">inches</text>
          <path d="M11.500 12V512" stroke="#ddd" />
        </svg>
        <svg class="canvas" viewBox="36 123 950 487">
          {@render key(719, 134.5, 129.500, 73)}
          {@render key(702.500, 219, 76, 76)}
          {@render key(820.500, 220, 76, 76)}
          <path d="M771 170.800L792 183.500H781.500V196.300H760.500V183.500H750Z" fill="#000" />
          <g class="keys"><text x="744" y="168" font-size="22" textLength="45">Shift</text><text x="739.500" y="266.500" font-size="28" text-anchor="middle">E</text><text x="857.500" y="267" font-size="27.500" text-anchor="middle">C</text></g>
          <g fill="none" stroke="#bd3a50" stroke-width=".85">
            <circle cx="458.800" cy="386" r="164" />
            {#each marks as a}<rect x="456.200" y="222" width="5.200" height="41" transform="rotate({a} 458.800 386)" />{/each}
            <path d="M459.800 222V263" stroke="#8c6670" stroke-width=".7" />
          </g>
          <g class="nums">
            <text x="302.500" y="147" textLength="95">7 8 9 10</text>
            {#each digits as [d, x, y]}<text {x} {y} text-anchor="middle">{d}</text>{/each}
            <text x="404.500" y="271">11</text>
          </g>
          {#each handles as [x, y]}<rect x={x - 3.2} y={y - 3.2} width="6.400" height="6.400" />{/each}
          <path d="M399 260L403 264M403 260L399 264" stroke="#222" stroke-width=".9" />
          <g fill="#fff" stroke="#333" stroke-width=".8"><rect x="403.500" y="269.500" width="3.200" height="3.200" /><rect x="416.500" y="269.500" width="3.200" height="3.200" /><rect x="377.500" y="241.500" width="2.200" height="2.200" /></g>
          <path d="M392 265.500V276.500M386.500 271H397.500" stroke="#000" stroke-width="1.500" />
          <path d="M390 267.500L392 265L394 267.500ZM390 274.500L392 277L394 274.500ZM388.500 269L386 271L388.500 273ZM395.500 269L398 271L395.500 273Z" />
        </svg>
        <div class="vscroll">{@render ic('bu', 'i12')}<div class="vthumb"></div>{@render ic('bd', 'i12')}</div>
      </div>
      <div class="hscroll"><div class="end">{@render ic('bl', 'i12')}</div><div class="hthumb"></div><div class="end">{@render ic('br', 'i12')}</div><svg class="i12" viewBox="0 0 16 16"><circle cx="7" cy="7" r="5.200" fill="none" stroke="#444" stroke-width="1.300" /><circle cx="7" cy="7" r="2.200" fill="none" stroke="#444" stroke-width="1.300" /><path d="M11 11L15 15" stroke="#444" stroke-width="2" /></svg></div>
      <div class="pages">
        {@render ic('darkplus', 'i14 p1')}{@render ic('first')}{@render ic('prev', 'i14 p2')}
        <span class="of"><b>1</b><span>of</span><em>1</em></span>
        {@render ic('next')}{@render ic('last', 'i14 p3')}{@render ic('darkplus', 'i14 p4')}
        <div class="page">Page <b>1</b></div>
      </div>
      <div class="docpal">
        <i class="grip"></i>{@render ic('tri', 'i12')}{@render ic('dropper', 'i12 e')}{@render ic('lt', 'i11')}<div class="nocol">{@render ic('none', 'i12')}</div>
        <span>Drag colors (or objects) here to store these colors with your document</span>{@render ic('gt', 'i12')}{@render ic('gtgt', 'i12 z')}
      </div>
    </section>

    <section class="side">
      <div class="dhead"><span>Transform</span>{@render ic('dbl', 'i12')}{@render ic('graycl', 'i12')}</div>
      <div class="srow">
        <div class="dbody">
          <div class="modes"><div>{@render ic('move')}</div><div class="mon">{@render ic('rot')}</div><div>{@render ic('scale', 'i16')}</div><div>{@render ic('size', 'i15')}</div><div>{@render ic('skew', 'i15')}</div></div>
          <h4>Rotate</h4>
          <div class="frow f1"><label for="ang">Angle:</label>{@render spin('30.0')}<div class="deg"></div></div>
          <hr />
          <h4 class="h2">Center</h4>
          <div class="center">
            <svg viewBox="0 0 18 18">{@html anchor}</svg>
            <div class="xy"><div class="frow"><label for="cx">X:</label>{@render spin('17.891 "')}</div><div class="frow"><label for="cy">Y:</label>{@render spin('6.545 "')}</div><div class="rel"><i></i>Relative Center</div></div>
          </div>
          <div class="frow f3"><label for="n">Copies:</label>{@render spin('11')}</div>
          <button>Apply</button>
        </div>
        <aside class="strip"><div class="vt">{@render ic('xform', 'i13')}<span>Transform</span></div>{@render ic('plus', 'i15')}</aside>
      </div>
    </section>
    <aside class="pal">
      <i class="dots"></i>{@render ic('tri', 'i14 a')}{@render ic('dropper', 'i13')}{@render ic('gu', 'i12 b')}
      <div class="sw"><div class="chip">{@render ic('none', 'i13')}</div>{#each swatches as c}<div class="chip" style:background={c}></div>{/each}</div>
      {@render ic('gd', 'i11')}{@render ic('gtgt', 'i12 d')}
    </aside>
  </div>

  <footer class="status">
    <div class="sg">{@render ic('gear', 'i14')}</div>
    <span class="hint">Click an object twice for rotating/skewing; dbl-clicking tool selects all objects; Shift+click multi-selects; Alt+click digs; Ctrl+click selects in a group</span>
    <span class="selinfo">2 Objects Selected on Layer 1</span>
    <div class="fo fa">{@render ic('bucket', 'i14')}{@render ic('fills', 'i16')}<span>Several Fills</span></div>
    <div class="fo fb">{@render ic('pen', 'i14')}{@render ic('outlines', 'i16')}<span>Several Outlines</span></div>
    {@render ic('monitor', 'i14 mo')}
    <div class="recorder"><svg viewBox="0 0 62 27"><path d="M14 9V18M18.500 9V18" stroke="#ddd" stroke-width="2" /><circle cx="47" cy="12.500" r="3.500" fill="none" stroke="#bbb" stroke-width="1.500" /><circle cx="47" cy="12.500" r="1.200" fill="#bbb" /><path d="M42 18.500H52M42 18L51 8" stroke="#bbb" stroke-width="1.300" /></svg></div>
  </footer>

  <div class="taskbar">
    {#each apps as a}<div class="app {a}">{@render ic(a, a === 'start' || a === 'find' || a === 'tasks' ? 'i15' : a === 'box' || a === 'gimp' ? 'i18' : 'i20')}</div>{/each}
    <div class="app run cur">{@render ic('corel', 'i20')}</div><div class="app run chrome">{@render ic('chrome', 'i20')}</div><div class="app run">{@render ic('snagred', 'i20')}</div>
    <div class="weather">{@render ic('moon', 'i18')}<span>92°F&nbsp; Clear</span></div>
    <div class="tray">{#each tray as t}{@render ic(t, t === 'chevup' ? 'i14' : 'i15')}{/each}</div>
    <div class="clock"><span>9:44 PM</span><span>7/20/2022</span></div>
    {@render ic('note', 'i15')}
  </div>
</div>

<style>
  :global(body) { margin: 0; overflow: hidden; }
  * { box-sizing: border-box; }
  svg { display: block; flex: none; }
  .window { width: 1280px; height: 720px; display: flex; flex-direction: column; background: #f4f4f4; font: 9.1px/12px "Open Sans", "Noto Sans", sans-serif; letter-spacing: -.27px; color: #1c1c1c; overflow: hidden; white-space: nowrap; }
  .i11 { width: 11px; height: 11px; } .i12 { width: 12px; height: 12px; } .i13 { width: 13px; height: 13px; } .i14 { width: 14px; height: 14px; }
  .i15 { width: 15px; height: 15px; overflow: visible; } .i16 { width: 16px; height: 16px; } .i18 { width: 18px; height: 18px; } .i20 { width: 20px; height: 20px; overflow: visible; }
  u { text-underline-offset: 1px; text-decoration-thickness: 1px; }
  .title { height: 17px; flex: none; background: #fff; display: flex; align-items: center; padding-left: 2px; gap: 5px; }
  .title > span { padding-top: 2px; letter-spacing: -.34px; }
  .winbtns { margin-left: auto; display: flex; align-items: center; gap: 13px; padding-right: 3px; }
  .winbtns > :global(.wm) { margin-left: -1px; } .winbtns > :global(.wc) { margin-left: -5px; }
  .menu { height: 17px; flex: none; background: #d8d8d8; display: flex; align-items: center; gap: 17.75px; padding: 3px 0 0 9px; }
  .std { height: 24px; flex: none; display: flex; align-items: center; padding-left: 1px; border-bottom: 1px solid #e2e2e2; background: #f5f5f5; }
  .cell { height: 20px; flex: none; display: flex; align-items: center; justify-content: center; position: relative; }
  .cell span { padding-top: 1px; }
  .cell.s i { width: 1px; height: 20px; background: #dedede; }
  .cell.on { border: 1px solid #b5b5b5; background: #fdfdfd; }
  .cell.combo { border: 1px solid #b5b5b5; background: #fff; height: 19px; justify-content: space-between; padding-left: 3px; margin-left: 1px; margin-right: -1px; }
  .combo b { width: 14px; align-self: stretch; background: #e9e9e9; border-left: 1px solid #ccc; display: grid; place-items: center; }
  .caret { width: 6px; height: 4px; }
  .cell.snap, .cell.t { justify-content: flex-start; padding-left: 7px; }
  .cell.t { padding-left: 1px; }
  .gear::after { content: ""; position: absolute; right: 3px; bottom: 2px; border: 2px solid; border-color: transparent #666 #666 transparent; }
  .prop { height: 35px; flex: none; display: flex; align-items: center; padding-left: 4px; border-bottom: 1px solid #e9e9e9; background: #f5f5f5; }
  .anchor { width: 19px; height: 19px; }
  .lbl { display: flex; flex-direction: column; width: 16px; padding: 1px 0 0 7px; }
  .lbl.pc { padding-left: 3px; width: 15px; }
  .pair { display: flex; flex-direction: column; background: #fff; border: 1px solid #c2c2c2; height: 25px; letter-spacing: 0; }
  .pair span { flex: 1; line-height: 13px; padding-left: 3px; color: #303840; height: 11.5px; }
  .pair span + span { border-top: 1px solid #d2d2d2; line-height: 12px; }
  .pos { width: 74px; } .siz { width: 73px; } .pct { width: 35px; margin-left: 4px; }
  .sep { width: 1px; height: 32px; background: #e0e0e0; flex: none; }
  .s1 { margin: 0 4px 0 4px; }
  .dims { display: flex; flex-direction: column; gap: 1px; margin-right: 1px; }
  .s2 { margin: 0 4px 0 7px; }
  .field { width: 41px; height: 19px; margin-left: 1px; border: 1px solid #b9b9b9; background: #fff; line-height: 18px; padding-left: 2px; letter-spacing: 0; }
  .deg { width: 7px; height: 7px; border: 1.5px solid #444; border-radius: 50%; }
  .prop .deg { margin: -6px 0 0 8px; }
  .s3 { margin: 0 3px 0 7px; } .slot { width: 22px; display: grid; place-items: center; flex: none; }
  .s4 { margin: 0 2px 0 5px; } .s5 { margin: 0 4px 0 2px; } .s6 { margin: 0 1px 0 4px; }
  .drop { height: 19px; border: 1px solid #b9b9b9; background: #fff; display: flex; align-items: center; justify-content: flex-end; }
  .drop b { width: 14px; align-self: stretch; background: #e9e9e9; border-left: 1px solid #ccc; display: grid; place-items: center; }
  .drop em { flex: 1; height: 1px; background: #333; }
  .d1 { width: 66px; margin: 0 4px 0 -1px; } .d2 { width: 83px; }
  .s7 { margin: 0 1px 0 5px; } .ug { margin-left: 3px; } .s8 { margin: 0 2px 0 3px; } .s9 { margin: 0 6px 0 2px; }
  .main { height: 567px; flex: none; display: flex; }
  .tools { width: 24px; border-right: 1px solid #d9d9d9; display: flex; flex-direction: column; padding-top: 2px; background: #f5f5f5; }
  .tool { width: 21px; margin-left: 2px; display: flex; align-items: center; justify-content: center; position: relative; flex: none; }
  .tool.sel { background: #fff; border: 1px solid #bbb; width: 20px; }
  .tool.rule::before { content: ""; height: 1px; width: 19px; background: #dcdcdc; }
  .tool s { position: absolute; right: 0; bottom: 3px; border: 2px solid; border-color: transparent #777 #777 transparent; }
  .tool.sel s { bottom: 0; }
  .doc { width: 976px; flex: none; display: flex; flex-direction: column; }
  .tabs { height: 18px; display: flex; border-bottom: 1.5px solid #6cc0dc; background: #e8e8e8; flex: none; line-height: 19px; }
  .home, .tab { background: #d8d8d8; flex: none; height: 17px; }
  .home { width: 21px; display: grid; place-items: center; padding-right: 7px; }
  .tab.active { width: 80px; background: #cce0fb; padding-left: 7px; }
  .newtab { width: 16px; background: #d8d8d8; display: grid; place-items: center; }
  .hr { width: 976px; height: 12px; background: #f5f5f5; }
  .hr text, .vr text { font: 6.800px "Open Sans", sans-serif; fill: #888; }
  .work { display: flex; height: 487px; flex: none; background: #fff; }
  .vr { width: 12px; height: 500px; background: #f5f5f5; z-index: 1; }
  .canvas { width: 950px; height: 487px; background: #fff; }
  .keys text, .nums text { font-family: "Liberation Sans", Arial, sans-serif; fill: #222; letter-spacing: 0; }
  .nums text { font-size: 26px; fill: #000; }
  .vscroll { width: 14px; display: flex; flex-direction: column; align-items: center; justify-content: space-between; background: #fff; padding: 1px 0; }
  .vthumb { width: 12px; height: 137px; background: #cbcbcb; margin: 0 0 12px 2px; }
  .hscroll { height: 13px; flex: none; background: #fff; display: flex; align-items: center; margin-left: 12px; }
  .end { width: 14px; height: 13px; background: #f4f4f4; display: grid; place-items: center; flex: none; }
  .hthumb { width: 369px; height: 12px; background: #cbcbcb; margin: 0 256px 0 298px; flex: none; }
  .pages { height: 19px; display: flex; align-items: center; border-top: 1px solid #ddd; border-bottom: 1px solid #ddd; padding-left: 2px; flex: none; }
  .pages > :global(.p1) { margin-right: 4px; } .pages > :global(.p2) { margin-left: 4px; }
  .of { margin: 0 8px 0 7px; color: #666; width: 27px; display: flex; justify-content: space-between; letter-spacing: 0; } .of b { font-weight: 400; color: #b38a3a; } .of em { font-style: normal; color: #5a8fb8; }
  .pages > :global(.p3) { margin-left: 4px; } .pages > :global(.p4) { margin: 0 2px 0 4px; }
  .page { margin-left: 1px; width: 83px; background: #d8d8d8; align-self: stretch; text-align: center; line-height: 18px; letter-spacing: -.1px; }
  .page b { font-weight: 400; color: #8b4a10; }
  .docpal { height: 18px; display: flex; align-items: center; flex: none; border-bottom: 1px solid #e2e2e2; }
  .grip { width: 4px; height: 14px; flex: none; margin: 0 1px 0 2px; background: radial-gradient(circle, #ccc .7px, transparent .8px) 0 0/2px 2px; }
  .docpal > :global(.e) { margin: 0 3px 0 3px; }
  .nocol { width: 15px; height: 15px; margin-left: 2px; background: #fff; border: 1px solid #777; display: grid; place-items: center; }
  .docpal span { flex: 1; text-align: center; font-style: italic; color: #aaa; padding: 1px 0 0 11px; }
  .docpal > :global(.z) { margin: 0 5px 0 2px; }
  .side { width: 264px; flex: none; border-left: 1px solid #fff; padding-left: 3px; display: flex; flex-direction: column; }
  .dhead { height: 18px; margin-top: 1px; flex: none; background: #e8e8e8; display: flex; align-items: center; gap: 4px; border-bottom: 1px solid #b8b8b8; padding: 0 4px 0 4px; }
  .dhead span { flex: 1; }
  .srow { flex: 1; display: flex; }
  .dbody { display: flex; flex-direction: column; padding: 2px 0 0 2px; flex: 1; border-right: 1px solid #999; }
  .modes { display: flex; gap: 3px; } .modes div { width: 19px; height: 19px; display: grid; place-items: center; }
  .modes .mon { border: 1px solid #aaa; background: #fff; }
  h4 { font-size: 9.100px; line-height: 12px; margin: 10px 0 0 1px; color: #111; letter-spacing: -.4px; }
  .dbody .h2 { margin-top: 16px; }
  .frow { display: flex; align-items: center; height: 20px; }
  .frow label { width: 64px; text-align: right; padding-right: 2px; letter-spacing: 0; }
  .f1 { margin-top: 8px; } .f1 .deg { margin: -6px 0 0 9px; }
  .spin { width: 67px; height: 19px; border: 1px solid #bbb; background: #fff; display: flex; align-items: center; justify-content: space-between; padding-left: 3px; letter-spacing: 0; }
  .arrows { width: 14px; align-self: stretch; border-left: 1px solid #ccc; background: #eee; display: flex; flex-direction: column; justify-content: space-around; align-items: center; }
  .arrows svg { width: 4px; height: 2.500px; }
  hr { border: 0; border-top: 1px solid #ddd; width: 238px; margin: 9px 0 0 0; height: 0; }
  .center { display: flex; align-items: flex-start; padding-left: 8px; margin-top: 7px; }
  .center > svg { width: 28px; height: 28px; margin-top: 8px; }
  .xy label { width: 31px; } .xy .frow { height: 22px; }
  .rel { display: flex; align-items: center; gap: 2px; padding-left: 31px; height: 15px; letter-spacing: -.18px; } .rel i { width: 11px; height: 11px; border: 1px solid #bbb; background: #fff; }
  .f3 { margin-top: 6.5px; }
  button { width: 238px; height: 19px; margin-top: 14px; border: 1px solid #bbb; background: #e9e9e9; font: inherit; letter-spacing: -.1px; color: #222; padding: 0; }
  .strip { width: 17px; flex: none; background: #e6e6e6; display: flex; flex-direction: column; align-items: center; gap: 3px; border-right: 1px solid #ddd; }
  .vt { width: 17px; height: 78px; background: #cce0fb; display: flex; flex-direction: column; align-items: center; gap: 4px; padding-top: 3px; }
  .vt span { writing-mode: vertical-rl; line-height: 13px; }
  .pal { width: 16px; display: flex; flex-direction: column; align-items: center; padding-top: 3px; }
  .dots { width: 13px; height: 3px; background: radial-gradient(circle, #bbb .7px, transparent .8px) 0 0/2px 2px; }
  .pal > :global(.a) { margin-top: 1px; } .pal > :global(.b) { margin: 3px 0 2px; }
  .sw { height: 482px; overflow: hidden; flex: none; width: 15px; }
  .chip { height: 14px; border: solid #0005; border-width: 0 1px 1px 1px; }
  .pal > :global(.d) { margin-top: 4px; }
  .status { height: 27px; flex: none; display: flex; align-items: center; position: relative; border-top: 1px solid #ddd; background: #f7f7f7; }
  .sg { padding-left: 7px; width: 27px; }
  .hint { width: 580px; } .selinfo { width: 275px; }
  .fo { display: flex; align-items: center; gap: 2px; } .fo span { padding-left: 1px; letter-spacing: -.25px; }
  .fa { width: 168px; } .fb { width: 209px; }
  .recorder { position: absolute; left: 1205px; top: -14px; width: 62px; height: 27px; background: #858585e6; border-radius: 5px; box-shadow: 0 1px 4px #0006; }
  .taskbar { height: 33px; flex: none; display: flex; align-items: center; background: linear-gradient(90deg, #233b41, #21383f 60%, #1a2440 90%); color: #fff; letter-spacing: 0; }
  .app { width: 41px; height: 33px; display: grid; place-items: center; flex: none; }
  .app.start, .app.find { width: 40px; } .app.snagit { width: 42px; }
  .run { border-bottom: 2px solid #83c0ee; width: 35px; margin-right: 6px; }
  .run.cur { width: 38px; background: #4b5f64; margin-left: 3px; margin-right: 5px; }
  .weather { margin-left: auto; display: flex; align-items: center; gap: 6px; font-size: 12px; letter-spacing: -.3px; width: 94px; }
  .tray { display: flex; gap: 5px; width: 136px; }
  .clock { display: flex; flex-direction: column; width: 56px; align-items: center; gap: 3px; font-size: 10px; letter-spacing: -.2px; margin-right: 10px; }
  .taskbar > :global(svg) { margin-right: 20px; }
</style>
